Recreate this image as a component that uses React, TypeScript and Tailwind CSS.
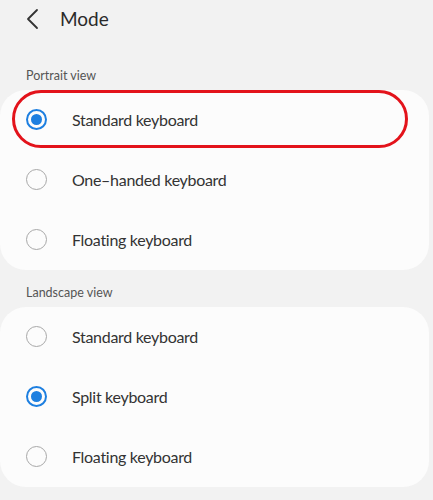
import React from "react";

type Option = { label: string; checked?: boolean; highlight?: boolean };

const portrait: Option[] = [
  { label: "Standard keyboard", checked: true, highlight: true },
  { label: "One–handed keyboard" },
  { label: "Floating keyboard" },
];

const landscape: Option[] = [
  { label: "Standard keyboard" },
  { label: "Split keyboard", checked: true },
  { label: "Floating keyboard" },
];

function Radio({ checked }: { checked?: boolean }) {
  if (checked) {
    return (
      <span className="flex h-[21px] w-[21px] items-center justify-center rounded-full border-[2.5px] border-[#1d7fe0]">
        <span className="h-[11px] w-[11px] rounded-full bg-[#1d7fe0]" />
      </span>
    );
  }
  return <span className="h-[21px] w-[21px] rounded-full border-[1.5px] border-[#a8a8a8]" />;
}

function Row({ opt }: { opt: Option }) {
  return (
    <div className="relative flex h-[60px] items-center">
      {opt.highlight && (
        <div className="absolute left-[12px] right-[21px] top-[0px] bottom-[2px] rounded-full border-[3px] border-[#e3131b]" />
      )}
      <div className="flex w-[72px] items-center justify-center pl-[1px]">
        <Radio checked={opt.checked} />
      </div>
      <span className="text-[16px] font-normal tracking-[-0.3px] text-[#333]">{opt.label}</span>
    </div>
  );
}

function Section({ title, options }: { title: string; options: Option[] }) {
  return (
    <div>
      <div className="pl-[26px] text-[12.5px] font-normal text-[#555]">{title}</div>
      <div className="mr-[4px] mt-[4px] rounded-[26px] bg-[#fcfcfc]">
        {options.map((o) => (
          <Row key={o.label} opt={o} />
        ))}
      </div>
    </div>
  );
}

export default function App() {
  return (
    <div
      className="h-[500px] w-[433px] overflow-hidden bg-[#f2f2f2]"
      style={{ fontFamily: "Lato, 'Noto Sans', sans-serif" }}
    >
      <div className="flex h-[38px] items-center">
        <svg width="14" height="22" viewBox="0 0 14 22" className="ml-[25px]">
          <path d="M12 2 L3 11 L12 20" fill="none" stroke="#333" strokeWidth="1.8" strokeLinecap="round" strokeLinejoin="round" />
        </svg>
        <span className="ml-[21px] text-[19px] text-[#2a2a2a]">Mode</span>
      </div>
      <div className="mt-[29px]">
        <Section title="Portrait view" options={portrait} />
      </div>
      <div className="mt-[14px]">
        <Section title="Landscape view" options={landscape} />
      </div>
    </div>
  );
}
